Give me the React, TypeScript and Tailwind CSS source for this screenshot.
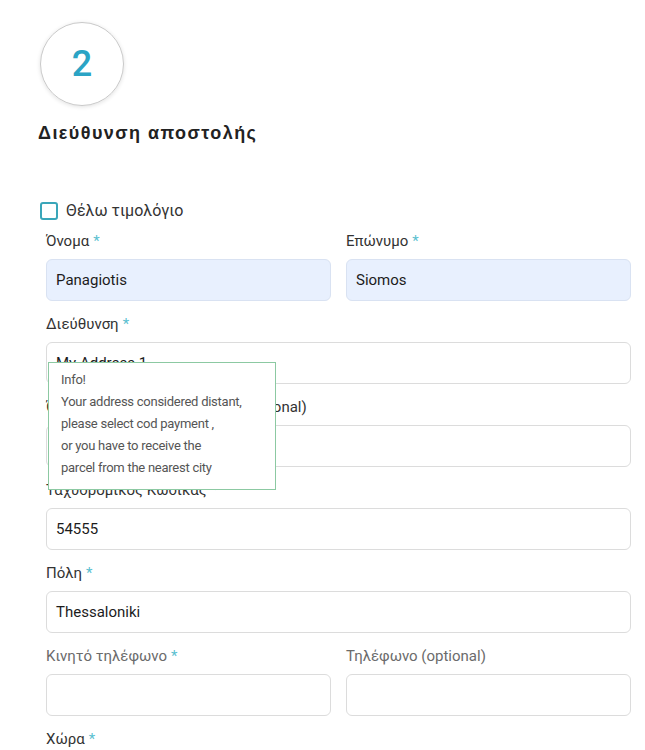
import type { ReactNode } from 'react';

const font = { fontFamily: 'Roboto, "Noto Sans", sans-serif' };

function Label({ text, required, muted }: { text: string; required?: boolean; muted?: boolean }) {
  return (
    <div className={`h-[18px] mb-[9px] text-[15px] leading-[18px] ${muted ? 'text-[#6b6b6b]' : 'text-[#333]'}`}>
      {text}
      {required && <span className="text-[#5bc0d0] ml-1">*</span>}
    </div>
  );
}

function Input({ value, filled }: { value?: string; filled?: boolean }) {
  return (
    <div
      className={`h-[42px] rounded-[6px] border px-[9px] flex items-center text-[15px] text-[#1c1c1c] ${
        filled ? 'bg-[#e8f0fe] border-[#d9e2f2]' : 'bg-white border-[#dcdcdc]'
      }`}
    >
      {value}
    </div>
  );
}

function Field({
  label,
  required,
  muted,
  value,
  filled,
  children,
}: {
  label: string;
  required?: boolean;
  muted?: boolean;
  value?: string;
  filled?: boolean;
  children?: ReactNode;
}) {
  return (
    <div className="relative flex-1">
      <Label text={label} required={required} muted={muted} />
      <Input value={value} filled={filled} />
      {children}
    </div>
  );
}

export default function App() {
  return (
    <div className="bg-white min-h-[750px] w-[645px] overflow-hidden pl-[40px] pr-[14px] pt-[22px]" style={font}>
      {/* Step circle */}
      <div className="w-[84px] h-[84px] rounded-full border border-[#c9c9c9] shadow-[0_1px_4px_rgba(0,0,0,0.12)] flex items-center justify-center">
        <span className="text-[36px] font-medium text-[#2ba4c5]">2</span>
      </div>

      <h2
        className="mt-[15px] -ml-[2px] text-[18px] leading-[24px] font-bold tracking-[0.08em] text-[#222]"
        style={{ fontFamily: '"Liberation Sans", Arial, sans-serif' }}
      >
        Διεύθυνση αποστολής
      </h2>

      {/* Invoice checkbox */}
      <label className="mt-[57px] flex items-center gap-[8px] h-[18px]">
        <span className="w-[18px] h-[18px] rounded-[3px] border-2 border-[#3aa6b9] bg-white" />
        <span className="text-[16px] text-[#333]">Θέλω τιμολόγιο</span>
      </label>

      <div className="ml-[6px] mt-[12px] flex flex-col gap-[14px]">
        <div className="flex gap-[15px]">
          <Field label="Όνομα" required value="Panagiotis" filled />
          <Field label="Επώνυμο" required value="Siomos" filled />
        </div>

        <Field label="Διεύθυνση" required value="My Address 1">
          <div className="absolute left-[2px] top-[47px] w-[228px] h-[128px] bg-white border border-[#8cc9a2] pl-[12px] pt-[6px] text-[13px] leading-[22px] tracking-[-0.02em] text-[#555] z-10">
            <div>Info!</div>
            <div>Your address considered distant,</div>
            <div>please select cod payment ,</div>
            <div>or you have to receive the</div>
            <div>parcel from the nearest city</div>
          </div>
        </Field>

        <Field label="Όροφος κουδούνι σημείωση (optional)" />

        <Field label="Ταχυδρομικός Κωδικας" required value="54555" />

        <Field label="Πόλη" required value="Thessaloniki" />

        <div className="flex gap-[15px]">
          <Field label="Κινητό τηλέφωνο" required muted />
          <Field label="Τηλέφωνο (optional)" muted />
        </div>

        <Label text="Χώρα" required />
      </div>
    </div>
  );
}
